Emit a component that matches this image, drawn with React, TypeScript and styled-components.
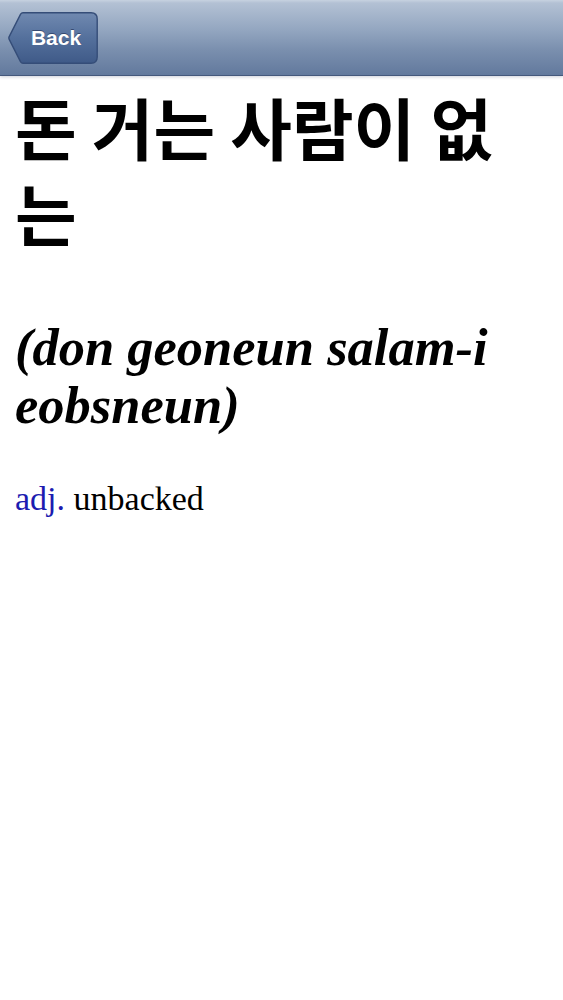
import styled, { createGlobalStyle } from "styled-components";

const GlobalStyle = createGlobalStyle`
  html, body {
    margin: 0;
    padding: 0;
    background: #ffffff;
  }
  body {
    font-family: "Liberation Serif", "Times New Roman", serif;
    -webkit-font-smoothing: antialiased;
  }
`;

const Screen = styled.div`
  width: 563px;
  min-height: 1000px;
  background: #ffffff;
`;

const NavBar = styled.header`
  height: 76px;
  display: flex;
  align-items: center;
  padding: 0 8px;
  box-sizing: border-box;
  background: linear-gradient(
    to bottom,
    #c7d2e0 0px,
    #b3c1d4 3px,
    #93a6c0 30px,
    #7a8fae 50px,
    #62799d 75px
  );
  border-bottom: 1px solid #44587c;
  box-shadow: 0 1px 3px rgba(60, 70, 110, 0.25);
`;

const BackButton = styled.button`
  position: relative;
  width: 90px;
  height: 52px;
  padding: 0 0 0 6px;
  border: none;
  background: none;
  display: flex;
  align-items: center;
  justify-content: center;
  cursor: pointer;
`;

const ButtonShape = styled.svg`
  position: absolute;
  left: 0;
  top: 0;
  width: 100%;
  height: 100%;
`;

const ButtonLabel = styled.span`
  position: relative;
  font-family: "Liberation Sans", Arial, sans-serif;
  font-weight: bold;
  font-size: 21px;
  color: #ffffff;
  text-shadow: 0 -1px 0 rgba(30, 45, 80, 0.6);
`;

const Content = styled.main`
  padding: 0 15px;
`;

const Headword = styled.h1`
  margin: 7px 0 0;
  font-family: "Noto Sans CJK KR", "Noto Sans", sans-serif;
  font-weight: bold;
  font-size: 67px;
  line-height: 86px;
  color: #000000;
`;

const Romanization = styled.h2`
  margin: 63px 0 0;
  font-family: "Liberation Serif", "Times New Roman", serif;
  font-style: italic;
  font-weight: bold;
  font-size: 52.5px;
  line-height: 58px;
  color: #000000;
`;

const Definition = styled.p`
  margin: 45px 0 0;
  font-family: "Liberation Serif", "Times New Roman", serif;
  font-size: 34px;
  line-height: 40px;
  color: #000000;
`;

const PartOfSpeech = styled.span`
  color: #1c1cb0;
`;

function Back() {
  return (
    <BackButton>
      <ButtonShape viewBox="0 0 90 52" preserveAspectRatio="none">
        <defs>
          <linearGradient id="backFill" x1="0" y1="0" x2="0" y2="1">
            <stop offset="0" stopColor="#7089b0" />
            <stop offset="0.5" stopColor="#54709c" />
            <stop offset="1" stopColor="#3f5a88" />
          </linearGradient>
        </defs>
        <path
          d="M15 0.8 H83 Q89.2 0.8 89.2 7 V45 Q89.2 51.2 83 51.2 H15 Q13.5 51.2 12.6 49.8 L1.2 27.4 Q0.5 26 1.2 24.6 L12.6 2.2 Q13.5 0.8 15 0.8 Z"
          fill="url(#backFill)"
          stroke="#354d78"
          strokeWidth="1.4"
        />
      </ButtonShape>
      <ButtonLabel>Back</ButtonLabel>
    </BackButton>
  );
}

export default function App() {
  return (
    <Screen>
      <GlobalStyle />
      <NavBar>
        <Back />
      </NavBar>
      <Content>
        <Headword>돈 거는 사람이 없는</Headword>
        <Romanization>(don geoneun salam-i eobsneun)</Romanization>
        <Definition>
          <PartOfSpeech>adj.</PartOfSpeech> unbacked
        </Definition>
      </Content>
    </Screen>
  );
}
